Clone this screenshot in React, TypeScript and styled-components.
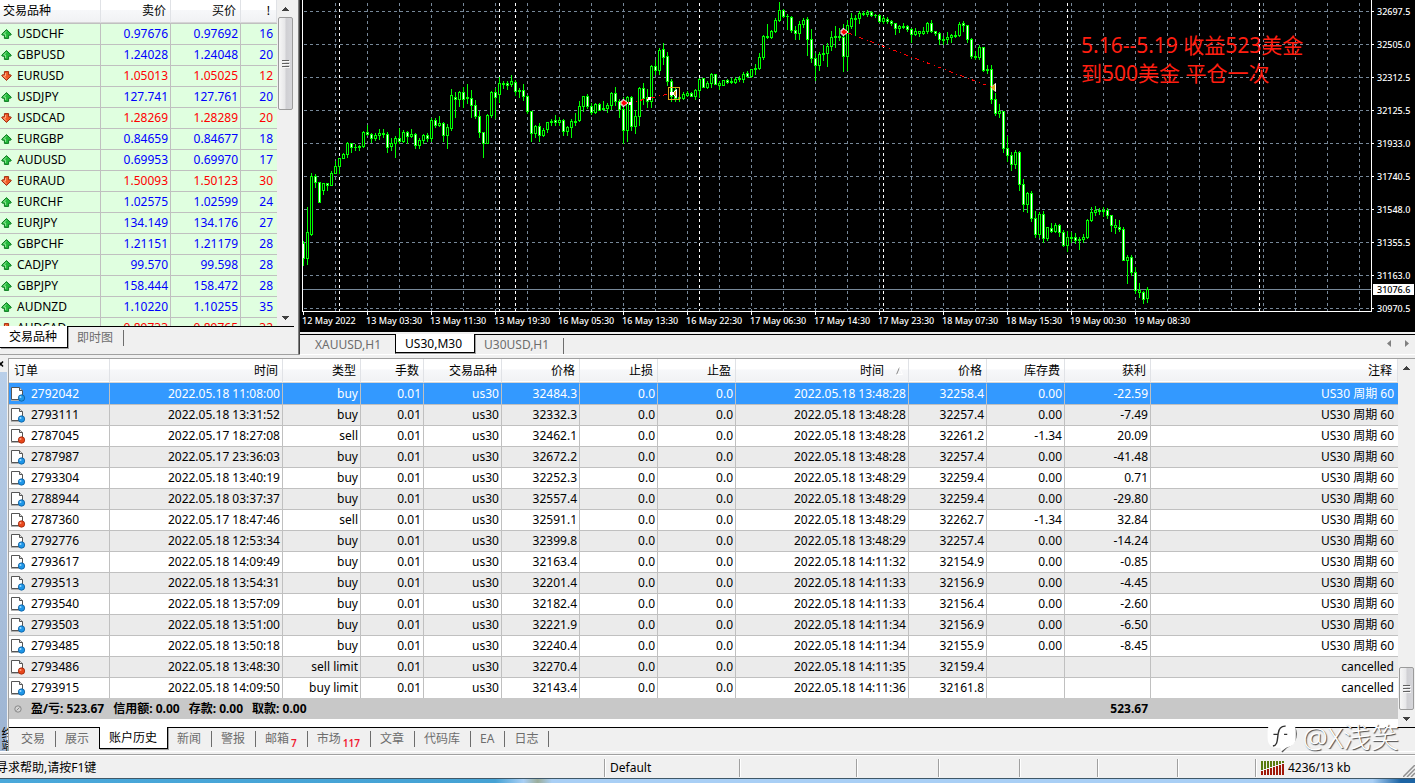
import React from 'react';
import styled, { createGlobalStyle, css } from 'styled-components';

const GlobalStyle = createGlobalStyle`
  *, *::before, *::after { box-sizing: border-box; }
  body {
    margin: 0;
    background: #f0f0f0;
    color: #000;
    font-family: "Noto Sans", "Noto Sans CJK SC", sans-serif;
    font-size: 12px;
    line-height: 20px;
  }
  button { font: inherit; color: inherit; border: 0; margin: 0; padding: 0; background: none; }
`;

/* ---------- data ---------- */

type Quote = [symbol: string, bid: string, ask: string, spread: number, dir: 'up' | 'down'];

const quotes: Quote[] = [
  ['USDCHF', '0.97676', '0.97692', 16, 'up'],
  ['GBPUSD', '1.24028', '1.24048', 20, 'up'],
  ['EURUSD', '1.05013', '1.05025', 12, 'down'],
  ['USDJPY', '127.741', '127.761', 20, 'up'],
  ['USDCAD', '1.28269', '1.28289', 20, 'down'],
  ['EURGBP', '0.84659', '0.84677', 18, 'up'],
  ['AUDUSD', '0.69953', '0.69970', 17, 'up'],
  ['EURAUD', '1.50093', '1.50123', 30, 'down'],
  ['EURCHF', '1.02575', '1.02599', 24, 'up'],
  ['EURJPY', '134.149', '134.176', 27, 'up'],
  ['GBPCHF', '1.21151', '1.21179', 28, 'up'],
  ['CADJPY', '99.570', '99.598', 28, 'up'],
  ['GBPJPY', '158.444', '158.472', 28, 'up'],
  ['AUDNZD', '1.10220', '1.10255', 35, 'up'],
  ['AUDCAD', '0.89733', '0.89765', 32, 'down'],
];

type Order = [
  id: string, opened: string, kind: string, openPrice: string,
  closed: string, closePrice: string, swap: string, profit: string, note: string,
];

const NOTE = 'US30 周期 60';

const orders: Order[] = [
  ['2792042', '2022.05.18 11:08:00', 'buy', '32484.3', '2022.05.18 13:48:28', '32258.4', '0.00', '-22.59', NOTE],
  ['2793111', '2022.05.18 13:31:52', 'buy', '32332.3', '2022.05.18 13:48:28', '32257.4', '0.00', '-7.49', NOTE],
  ['2787045', '2022.05.17 18:27:08', 'sell', '32462.1', '2022.05.18 13:48:28', '32261.2', '-1.34', '20.09', NOTE],
  ['2787987', '2022.05.17 23:36:03', 'buy', '32672.2', '2022.05.18 13:48:28', '32257.4', '0.00', '-41.48', NOTE],
  ['2793304', '2022.05.18 13:40:19', 'buy', '32252.3', '2022.05.18 13:48:29', '32259.4', '0.00', '0.71', NOTE],
  ['2788944', '2022.05.18 03:37:37', 'buy', '32557.4', '2022.05.18 13:48:29', '32259.4', '0.00', '-29.80', NOTE],
  ['2787360', '2022.05.17 18:47:46', 'sell', '32591.1', '2022.05.18 13:48:29', '32262.7', '-1.34', '32.84', NOTE],
  ['2792776', '2022.05.18 12:53:34', 'buy', '32399.8', '2022.05.18 13:48:29', '32257.4', '0.00', '-14.24', NOTE],
  ['2793617', '2022.05.18 14:09:49', 'buy', '32163.4', '2022.05.18 14:11:32', '32154.9', '0.00', '-0.85', NOTE],
  ['2793513', '2022.05.18 13:54:31', 'buy', '32201.4', '2022.05.18 14:11:33', '32156.9', '0.00', '-4.45', NOTE],
  ['2793540', '2022.05.18 13:57:09', 'buy', '32182.4', '2022.05.18 14:11:33', '32156.4', '0.00', '-2.60', NOTE],
  ['2793503', '2022.05.18 13:51:00', 'buy', '32221.9', '2022.05.18 14:11:34', '32156.9', '0.00', '-6.50', NOTE],
  ['2793485', '2022.05.18 13:50:18', 'buy', '32240.4', '2022.05.18 14:11:34', '32155.9', '0.00', '-8.45', NOTE],
  ['2793486', '2022.05.18 13:48:30', 'sell limit', '32270.4', '2022.05.18 14:11:35', '32159.4', '', '', 'cancelled'],
  ['2793915', '2022.05.18 14:09:50', 'buy limit', '32143.4', '2022.05.18 14:11:36', '32161.8', '', '', 'cancelled'],
];

/* Candles as [high, body top, body bottom, low, falling] in plot pixels. */
type Candle = [number, number, number, number, 0 | 1];

const candles: Candle[] = [
  [241, 243, 258, 265, 1], [207, 232, 258, 264, 0], [173, 176, 234, 235, 0], [174, 176, 182, 187, 1],
  [182, 182, 202, 202, 1], [183, 183, 190, 194, 0], [183, 183, 185, 190, 1], [171, 173, 185, 185, 0],
  [161, 166, 173, 173, 0], [158, 158, 166, 173, 0], [153, 154, 158, 158, 0], [142, 143, 154, 157, 0],
  [143, 143, 147, 152, 1], [144, 147, 147, 150, 0], [145, 146, 147, 150, 0], [131, 132, 146, 147, 0],
  [125, 132, 134, 135, 1], [133, 134, 138, 142, 1], [133, 135, 138, 140, 0], [129, 133, 135, 139, 0],
  [129, 133, 134, 137, 0], [132, 134, 147, 152, 1], [138, 143, 146, 150, 0], [136, 138, 143, 157, 0],
  [128, 138, 141, 143, 1], [130, 132, 141, 142, 0], [131, 132, 136, 143, 1], [129, 134, 136, 137, 0],
  [133, 134, 145, 148, 1], [138, 140, 145, 148, 0], [134, 135, 140, 143, 0], [133, 135, 138, 141, 1],
  [118, 120, 138, 141, 0], [118, 120, 125, 127, 1], [116, 123, 125, 126, 0], [122, 123, 135, 141, 1],
  [124, 127, 135, 148, 0], [89, 95, 128, 130, 0], [92, 97, 99, 117, 1], [91, 92, 99, 106, 0],
  [87, 92, 99, 107, 1], [84, 97, 98, 103, 0], [90, 98, 105, 117, 1], [100, 105, 116, 118, 1],
  [111, 116, 132, 137, 1], [132, 132, 143, 157, 1], [114, 115, 143, 143, 0], [91, 92, 115, 117, 0],
  [88, 92, 97, 118, 1], [77, 83, 94, 102, 0], [81, 83, 84, 88, 0], [81, 83, 85, 89, 1],
  [75, 81, 84, 86, 0], [80, 82, 91, 95, 1], [88, 90, 91, 97, 0], [84, 90, 96, 100, 1],
  [95, 96, 111, 113, 1], [111, 111, 133, 141, 1], [125, 126, 133, 137, 0], [123, 126, 135, 141, 1],
  [128, 130, 135, 136, 0], [122, 122, 129, 132, 0], [119, 121, 122, 125, 0], [115, 120, 122, 125, 1],
  [117, 120, 122, 125, 0], [119, 120, 131, 135, 1], [126, 127, 131, 135, 0], [119, 121, 127, 137, 0],
  [113, 121, 122, 125, 0], [101, 106, 120, 121, 0], [96, 96, 106, 111, 0], [94, 96, 106, 108, 1],
  [103, 106, 112, 114, 1], [103, 104, 112, 113, 0], [103, 104, 110, 110, 1], [101, 108, 109, 110, 0],
  [103, 105, 108, 112, 0], [92, 93, 105, 109, 0], [87, 93, 101, 105, 1], [99, 101, 109, 117, 1],
  [97, 109, 130, 143, 1], [96, 97, 130, 141, 0], [96, 97, 126, 130, 1], [110, 116, 126, 133, 0],
  [87, 88, 116, 125, 0], [83, 88, 98, 104, 1], [89, 97, 101, 107, 1], [65, 66, 101, 107, 0],
  [60, 66, 70, 74, 1], [48, 50, 70, 74, 0], [43, 49, 57, 64, 1], [52, 56, 81, 85, 1],
  [79, 81, 96, 101, 1], [88, 90, 98, 101, 1], [95, 97, 98, 101, 0], [92, 94, 98, 99, 0],
  [91, 93, 95, 96, 0], [92, 93, 96, 96, 1], [89, 90, 96, 99, 0], [78, 79, 90, 97, 0],
  [78, 78, 87, 87, 1], [81, 83, 87, 88, 0], [73, 74, 83, 87, 0], [74, 74, 84, 84, 1],
  [81, 83, 85, 89, 0], [80, 80, 85, 85, 0], [79, 80, 82, 83, 1], [78, 81, 82, 83, 0],
  [77, 79, 82, 83, 0], [76, 78, 79, 81, 0], [72, 74, 79, 82, 0], [71, 73, 76, 77, 1],
  [69, 69, 76, 77, 0], [64, 68, 69, 74, 0], [53, 57, 68, 69, 0], [35, 36, 57, 59, 0],
  [24, 36, 37, 38, 0], [30, 31, 37, 38, 0], [18, 20, 31, 32, 0], [2, 10, 20, 21, 0],
  [9, 10, 16, 17, 1], [14, 16, 16, 29, 1], [16, 17, 30, 32, 1], [26, 30, 33, 39, 1],
  [21, 24, 33, 39, 0], [18, 20, 24, 27, 0], [17, 19, 39, 55, 1], [29, 39, 58, 62, 1],
  [53, 58, 65, 80, 1], [52, 54, 65, 70, 0], [45, 53, 54, 60, 0], [43, 46, 53, 66, 0],
  [31, 37, 46, 50, 0], [26, 36, 37, 47, 0], [28, 36, 37, 40, 0], [24, 37, 56, 71, 1],
  [20, 25, 56, 70, 0], [13, 18, 26, 28, 0], [15, 18, 19, 35, 0], [11, 13, 18, 23, 0],
  [11, 13, 14, 15, 0], [10, 12, 14, 16, 0], [11, 12, 15, 16, 1], [14, 15, 15, 17, 0],
  [14, 15, 21, 22, 1], [16, 18, 21, 23, 0], [17, 19, 21, 23, 1], [20, 21, 23, 25, 1],
  [23, 23, 28, 34, 1], [25, 26, 28, 32, 0], [23, 26, 27, 28, 0], [25, 26, 29, 31, 1],
  [28, 29, 34, 42, 1], [28, 31, 34, 35, 0], [31, 31, 33, 36, 0], [27, 31, 33, 34, 0],
  [22, 23, 31, 33, 0], [20, 23, 31, 32, 1], [31, 31, 33, 35, 1], [32, 33, 39, 44, 1],
  [36, 39, 40, 44, 0], [32, 37, 39, 43, 0], [34, 35, 37, 42, 0], [31, 35, 36, 37, 0],
  [22, 24, 35, 36, 0], [21, 23, 25, 31, 1], [25, 25, 39, 42, 1], [38, 39, 56, 58, 1],
  [51, 56, 57, 59, 0], [45, 47, 57, 59, 0], [47, 47, 70, 71, 1], [65, 69, 70, 73, 0],
  [65, 69, 99, 103, 1], [93, 99, 113, 115, 1], [104, 111, 113, 117, 0], [111, 111, 148, 152, 1],
  [136, 148, 155, 161, 1], [152, 155, 164, 170, 1], [150, 152, 164, 168, 0], [151, 152, 184, 190, 1],
  [179, 184, 204, 211, 1], [192, 193, 204, 212, 0], [191, 193, 218, 221, 1], [211, 218, 234, 237, 1],
  [212, 214, 234, 237, 0], [211, 214, 238, 242, 1], [227, 227, 238, 240, 0], [223, 228, 231, 232, 1],
  [223, 225, 231, 232, 0], [224, 225, 232, 236, 1], [230, 232, 245, 246, 1], [231, 237, 245, 251, 0],
  [232, 237, 238, 242, 0], [233, 237, 240, 243, 1], [237, 239, 240, 249, 0], [234, 237, 239, 242, 0],
  [219, 220, 237, 238, 0], [207, 212, 220, 221, 0], [206, 210, 212, 215, 0], [208, 210, 211, 214, 0],
  [207, 210, 211, 216, 0], [208, 210, 215, 218, 1], [215, 215, 225, 231, 1], [219, 225, 227, 233, 0],
  [220, 227, 229, 231, 1], [227, 229, 260, 260, 1], [255, 257, 260, 283, 0], [255, 257, 272, 275, 1],
  [267, 272, 290, 293, 1], [283, 290, 292, 297, 0], [291, 292, 299, 303, 1], [287, 289, 298, 302, 0],
];

const priceScale = [
  '32697.5', '32505.0', '32312.5', '32125.5', '31933.0',
  '31740.5', '31548.0', '31355.5', '31163.0', '30970.5',
];

const timeScale = [
  '12 May 2022', '13 May 03:30', '13 May 11:30', '13 May 19:30', '16 May 05:30',
  '16 May 13:30', '16 May 22:30', '17 May 06:30', '17 May 14:30', '17 May 23:30',
  '18 May 07:30', '18 May 15:30', '19 May 00:30', '19 May 08:30',
];

const daySeparators = [36, 196, 212, 396, 580, 764, 956];

/* ---------- shared parts ---------- */

const TabBar = styled.nav<{ $inset?: number; $lead?: number }>`
  display: flex;
  align-items: flex-start;
  height: 24px;
  border-top: 1px solid #000;
  padding-left: ${p => p.$inset ?? 0}px;
  background: #f0f0f0;
`;

const Tab = styled.button<{ $active?: boolean; $first?: boolean }>`
  height: 22px;
  padding: 0 11px 0 9px;
  line-height: 20px;
  white-space: nowrap;
  color: #6d6d6d;
  background: linear-gradient(#6d6d6d, #6d6d6d) right 3px / 1px 16px no-repeat;
  ${p => p.$active && css`
    margin: -1px 0 0 ${p.$first ? 0 : -1}px;
    padding: 1px 10px 0 9px;
    color: #000;
    background: #fff;
    border: solid #000;
    border-width: 0 1px 1px ${p.$first ? 0 : 1}px;
    box-shadow: 1px 1px 0 #a0a0a0;
  `}
`;

const TabCount = styled.sub`
  margin-left: 2px;
  font-size: 10px;
  line-height: 10px;
  vertical-align: -4px;
  font-weight: 600;
  color: #f01830;
`;

const Track = styled.div`
  display: flex;
  flex-direction: column;
  flex: none;
  width: 17px;
  padding: 0 1px;
  background: #f0f0f0;
`;

const Arrow = styled.button`
  display: flex;
  align-items: center;
  justify-content: center;
  flex: none;
  height: 17px;
  width: 15px;
`;

const Thumb = styled.div<{ $height: number; $push?: boolean }>`
  display: flex;
  align-items: center;
  justify-content: center;
  flex: none;
  height: ${p => p.$height}px;
  margin-top: ${p => (p.$push ? 'auto' : 0)};
  border: 1px solid #9b9b9b;
  border-radius: 2px;
  background: linear-gradient(90deg, #f6f6f6, #e6e6e8 48%, #cfcfd3 52%, #d6d6da);
`;

const Filler = styled.div`
  flex: 1;
`;

function Triangle({ down }: { down?: boolean }) {
  return (
    <svg width="7" height="4" shapeRendering="crispEdges" aria-hidden="true">
      <path d={down ? 'M0 0h7v1H6v1H5v1H4v1H3V3H2V2H1V1H0z' : 'M3 0h1v1h1v1h1v1h1v1H0V3h1V2h1V1h1z'} fill="#404040" />
    </svg>
  );
}

function ScrollBar({ thumb, atEnd }: { thumb: number; atEnd?: boolean }) {
  return (
    <Track>
      <Arrow aria-label="向上滚动"><Triangle /></Arrow>
      <Thumb $height={thumb} $push={atEnd}>
        <svg width="8" height="8" shapeRendering="crispEdges" aria-hidden="true">
          {[0, 3, 6].map(y => (
            <g key={y}>
              <rect y={y} width="7" height="1" fill="#606060" />
              <rect x="1" y={y + 1} width="7" height="1" fill="#f8f8f8" />
            </g>
          ))}
        </svg>
      </Thumb>
      {!atEnd && <Filler />}
      <Arrow aria-label="向下滚动"><Triangle down /></Arrow>
    </Track>
  );
}

const Grid = styled.table`
  flex: 1;
  width: 0;
  table-layout: fixed;
  border-collapse: separate;
  border-spacing: 0;
  align-self: flex-start;
`;

const HeadCell = styled.th<{ $left?: boolean; $pad?: number }>`
  height: 22px;
  padding: 0 ${p => p.$pad ?? 4}px 0 ${p => (p.$left ? p.$pad ?? 4 : 0)}px;
  font-weight: 400;
  line-height: 20px;
  text-align: ${p => (p.$left ? 'left' : 'right')};
  white-space: nowrap;
  border-right: 1px solid #e0e2e6;
  border-bottom: 1px solid #d5d5d5;
  background: linear-gradient(#fff, #fff 45%, #f7f8fa 46%, #f1f2f4);
`;

/* ---------- market watch ---------- */

const Workspace = styled.div`
  display: flex;
  flex: none;
`;

const MarketPanel = styled.section`
  display: flex;
  flex-direction: column;
  flex: none;
  width: 299px;
  border-right: 1px solid #808080;
  border-bottom: 1px solid #a0a0a0;
  padding-right: 4px;
`;

const MarketView = styled.div`
  display: flex;
  height: 326px;
  overflow: hidden;
  background: #fff;
`;

const MarketHead = styled(HeadCell)`
  height: 23px;
`;

const QuoteCell = styled.td<{ $dir?: 'up' | 'down'; $last?: boolean }>`
  height: 21px;
  padding: 0 ${p => (p.$last ? 4 : 2)}px 0 1px;
  border-top: 1px solid #c0c0c0;
  border-right: ${p => (p.$last ? 0 : 1)}px solid #c0c0c0;
  background: #e0ffe0;
  text-align: ${p => (p.$dir ? 'right' : 'left')};
  color: ${p => (p.$dir === 'up' ? '#0000ff' : p.$dir === 'down' ? '#ff0000' : '#000')};
`;

const WithIcon = styled.span`
  display: flex;
  align-items: center;
  gap: 5px;
`;

function QuoteArrow({ dir }: { dir: 'up' | 'down' }) {
  const up = dir === 'up';
  return (
    <svg width="11" height="10" viewBox="0 0 11 10" aria-label={up ? '上涨' : '下跌'}>
      <g transform={up ? undefined : 'matrix(1 0 0 -1 0 10)'}>
        <path d="M5.5 .6 10.3 5.2 9.6 6.2H7.6V9.4H3.4V6.2H1.4L.7 5.2z" fill={up ? '#22b83a' : '#f05a24'} stroke={up ? '#0c7a20' : '#a02a10'} strokeWidth="1" />
        <path d="M5.3 2.2 2.6 5H4.6V8" fill="none" stroke={up ? '#90e896' : '#ffb48a'} strokeWidth="1" />
      </g>
    </svg>
  );
}

function MarketWatch() {
  return (
    <MarketPanel>
      <MarketView>
        <Grid>
          <colgroup>
            <col width="101" /><col width="70" /><col width="70" /><col />
          </colgroup>
          <thead>
            <tr>
              <MarketHead $left $pad={3}>交易品种</MarketHead>
              <MarketHead>卖价</MarketHead>
              <MarketHead>买价</MarketHead>
              <MarketHead $pad={6}>!</MarketHead>
            </tr>
          </thead>
          <tbody>
            {quotes.map(([symbol, bid, ask, spread, dir]) => (
              <tr key={symbol}>
                <QuoteCell><WithIcon><QuoteArrow dir={dir} />{symbol}</WithIcon></QuoteCell>
                <QuoteCell $dir={dir}>{bid}</QuoteCell>
                <QuoteCell $dir={dir}>{ask}</QuoteCell>
                <QuoteCell $dir={dir} $last>{spread}</QuoteCell>
              </tr>
            ))}
          </tbody>
        </Grid>
        <ScrollBar thumb={93} />
      </MarketView>
      <TabBar>
        <Tab $active $first>交易品种</Tab>
        <Tab>即时图</Tab>
      </TabBar>
    </MarketPanel>
  );
}

/* ---------- chart ---------- */

const ChartPanel = styled.section`
  display: flex;
  flex-direction: column;
  flex: 1;
  min-width: 0;
  border-left: 1px solid #404040;
  border-bottom: 1px solid #fff;
`;

const ChartBody = styled.div`
  display: flex;
  background: #000;
  color: #fff;
  font-size: 9px;
  font-weight: 500;
  line-height: 17px;
  padding-left: 2px;
  border-bottom: 1px solid #000;
  margin-bottom: 2px;
`;

const ChartMain = styled.div`
  display: flex;
  flex-direction: column;
  flex: 1;
  min-width: 0;
`;

const Plot = styled.div`
  position: relative;
  height: 312px;
  border: solid #fff;
  border-width: 0 1px 1px 1px;
  overflow: hidden;
`;

const PlotSvg = styled.svg`
  display: block;
  width: 100%;
  height: 311px;
`;

const Annotation = styled.p`
  position: absolute;
  left: 778px;
  top: 31px;
  margin: 0;
  font-size: 21px;
  line-height: 28px;
  font-weight: 400;
  white-space: pre;
  color: #ff1e10;
`;

const TimeAxis = styled.div`
  display: flex;
  height: 19px;
  overflow: hidden;
`;

const TimeLabel = styled.span`
  flex: none;
  width: 64px;
  white-space: nowrap;
  line-height: 18px;
  background: linear-gradient(#fff, #fff) 1px 0 / 1px 3px no-repeat;
`;

const PriceAxis = styled.div`
  position: relative;
  display: flex;
  flex-direction: column;
  gap: 16px;
  width: 43px;
  height: 331px;
  padding-top: 3px;
`;

const PriceLabel = styled.span`
  padding-left: 5px;
  background: linear-gradient(#fff, #fff) 0 8px / 2px 1px no-repeat;
`;

const CurrentPrice = styled.span`
  position: absolute;
  left: 1px;
  right: 1px;
  top: 284px;
  height: 11px;
  padding-left: 4px;
  line-height: 11px;
  color: #000;
  background: #fff;
`;

const ChartTabs = styled(TabBar)`
  height: 20px;
`;

const ChartTab = styled(Tab)`
  height: 19px;
  padding-right: ${p => (p.$active ? 12 : 15)}px;
  line-height: 18px;
`;

const TabScroll = styled.div`
  display: flex;
  gap: 14px;
  margin: 5px 6px 0 auto;
`;

const TabScrollButton = styled.button`
  display: flex;
`;

function Candles() {
  return (
    <g shapeRendering="crispEdges">
      {candles.map(([high, top, bottom, low, falling], i) => (
        <g key={i}>
          <rect x={4 * i} y={high} width="1" height={low - high + 1} fill="#00ff00" />
          <rect x={4 * i - 1} y={top} width="3" height={bottom - top + 1} fill="#00ff00" />
          {bottom - top > 1 && (
            <rect x={4 * i} y={top + 1} width="1" height={bottom - top - 1} fill={falling ? '#fff' : '#000'} />
          )}
        </g>
      ))}
    </g>
  );
}

function EntryArrow({ x, y }: { x: number; y: number }) {
  return (
    <path
      transform={`translate(${x} ${y})`}
      d="M-3 -2H-1V-4L4 0 -1 4V2H-3z"
      fill="#ff0000"
      stroke="#fff"
      strokeWidth="1"
    />
  );
}

function PriceChart() {
  return (
    <PlotSvg role="img" aria-label="US30,M30">
      <g stroke="#778899" strokeDasharray="3 3" shapeRendering="crispEdges">
        {priceScale.map((_, i) => (
          <line key={i} x1="1" x2="100%" y1={11.5 + 33 * i} y2={11.5 + 33 * i} />
        ))}
        {Array.from({ length: 60 }, (_, i) => (
          <line key={i} x1={32.5 + 32 * i} x2={32.5 + 32 * i} y1="3" y2="311" />
        ))}
      </g>
      <g stroke="#fff" strokeDasharray="3 3" shapeRendering="crispEdges">
        {daySeparators.map(x => <line key={x} x1={x + 0.5} x2={x + 0.5} y1="3" y2="311" />)}
      </g>
      <rect y="289" width="100%" height="1" fill="#778899" />
      <Candles />
      <g fill="none" stroke="#ff0000" strokeDasharray="4 4 1 3" shapeRendering="crispEdges">
        <path d="M325 103 370 93" />
        <path d="M545 33 688 87" />
      </g>
      <EntryArrow x={321} y={103} />
      <EntryArrow x={541} y={32} />
      <rect x="326" y="102" width="3" height="3" fill="#fff" />
      <rect x="345" y="97" width="3" height="3" fill="#fff" />
      <path d="M373.5 89.500V97.500L369.500 93.500z" fill="#daa520" stroke="#fff" />
      <rect x="367" y="92" width="4" height="3" fill="#fff" />
      <rect x="365.5" y="87.500" width="11" height="12" fill="none" stroke="#daa520" />
      <path d="M692.500 83.500V91.500L688 87.500z" fill="#daa520" stroke="#fff" />
      <path d="M692 84V91L688 87.500z" fill="#daa520" />
    </PlotSvg>
  );
}

function ChartWindow() {
  return (
    <ChartPanel>
      <ChartBody>
        <ChartMain>
          <Plot>
            <PriceChart />
            <Annotation>{'5.16--5.19 收益523美金\n到500美金 平仓一次'}</Annotation>
          </Plot>
          <TimeAxis>
            {timeScale.map(t => <TimeLabel key={t}>{t}</TimeLabel>)}
          </TimeAxis>
        </ChartMain>
        <PriceAxis>
          {priceScale.map(p => <PriceLabel key={p}>{p}</PriceLabel>)}
          <CurrentPrice>31076.6</CurrentPrice>
        </PriceAxis>
      </ChartBody>
      <ChartTabs $inset={6}>
        <ChartTab>XAUUSD,H1</ChartTab>
        <ChartTab $active>US30,M30</ChartTab>
        <ChartTab>U30USD,H1</ChartTab>
        <TabScroll>
          <TabScrollButton aria-label="向左">
            <svg width="4" height="7" aria-hidden="true"><path d="M4 0V7L0 3.500z" fill="#808080" /></svg>
          </TabScrollButton>
          <TabScrollButton aria-label="向右">
            <svg width="4" height="7" aria-hidden="true"><path d="M0 0V7L4 3.500z" fill="#808080" /></svg>
          </TabScrollButton>
        </TabScroll>
      </ChartTabs>
    </ChartPanel>
  );
}

/* ---------- terminal ---------- */

const Terminal = styled.section`
  position: relative;
  display: flex;
  margin-top: 3px;
  border-bottom: 1px solid #fff;
`;

const SideBar = styled.aside`
  display: flex;
  flex-direction: column;
  flex: none;
  width: 8px;
  overflow: hidden;
`;

const CloseButton = styled.button`
  display: flex;
  height: 14px;
  padding-top: 3px;
`;

const SideTitle = styled.div`
  display: flex;
  align-items: flex-end;
  justify-content: flex-end;
  flex: 1;
  width: 7px;
  writing-mode: vertical-rl;
  line-height: 12px;
  color: #000;
  background: linear-gradient(#b9cfe9, #9db4d2);
`;

const TerminalMain = styled.div`
  flex: 1;
  min-width: 0;
  border: solid #a0a0a0;
  border-width: 1px 0 0 1px;
`;

const OrdersView = styled.div`
  display: flex;
  height: 368px;
  background: #fff;
`;

const OrderHead = styled(HeadCell)`
  height: 24px;
  box-shadow: inset 0 -1px 0 #fff;
`;

const OrderRow = styled.tr<{ $selected?: boolean; $shade?: boolean }>`
  background: ${p => (p.$selected ? '#3399ff' : p.$shade ? '#ebebeb' : '#fff')};
  color: ${p => (p.$selected ? '#fff' : '#000')};
`;

const OrderCell = styled.td<{ $first?: boolean; $last?: boolean }>`
  height: 21px;
  padding: 0 ${p => (p.$last ? 4 : 2)}px 0 1px;
  text-align: right;
  white-space: nowrap;
  border-top: 1px solid #c0c0c0;
  border-right: ${p => (p.$last ? 0 : 1)}px solid #c0c0c0;
  ${p => p.$first && css`border-top-color: transparent;`}
`;

const TotalCell = styled.td<{ $left?: boolean }>`
  height: 21px;
  padding: 0 3px 0 5px;
  font-weight: 700;
  text-align: ${p => (p.$left ? 'left' : 'right')};
  background: #c8c8c8;
`;

const Totals = styled.div`
  display: flex;
  align-items: center;
  gap: 9px;
`;

const SortedLabel = styled.span`
  display: inline-flex;
  align-items: center;
  gap: 12px;
`;

function OrderIcon({ sell }: { sell: boolean }) {
  const [edge, fill, glow] = sell ? ['#9c2408', '#e8481c', '#ffa080'] : ['#0c5c9c', '#1e96e8', '#a0dcff'];
  return (
    <svg width="16" height="16" viewBox="0 0 16 16" aria-label={sell ? '卖' : '买'}>
      <path d="M1.500 1.500H9.500L12.500 4.500V13.500H1.500z" fill="#fff" stroke="#555" />
      <path d="M9.500 1.500V4.500H12.500" fill="#ddd" stroke="#555" />
      <path d="M1 14.500H9" fill="none" stroke="#b0b0b0" />
      <circle cx="11.500" cy="12" r="3.200" fill={fill} stroke={edge} strokeWidth=".8" />
      <circle cx="10.500" cy="10.900" r="1" fill={glow} />
    </svg>
  );
}

const orderColumns = [101, 173, 78, 63, 78, 78, 78, 78, 173, 78, 78, 86];

const terminalTabs: { label: string; count?: number; active?: boolean }[] = [
  { label: '交易' }, { label: '展示' }, { label: '账户历史', active: true }, { label: '新闻' },
  { label: '警报' }, { label: '邮箱', count: 7 }, { label: '市场', count: 117 }, { label: '文章' },
  { label: '代码库' }, { label: 'EA' }, { label: '日志' },
];

function OrderHistory() {
  return (
    <Grid>
      <colgroup>
        {orderColumns.map((w, i) => <col key={i} width={w} />)}
        <col />
      </colgroup>
      <thead>
        <tr>
          <OrderHead $left $pad={5}>订单</OrderHead>
          <OrderHead>时间</OrderHead>
          <OrderHead>类型</OrderHead>
          <OrderHead>手数</OrderHead>
          <OrderHead>交易品种</OrderHead>
          <OrderHead>价格</OrderHead>
          <OrderHead>止损</OrderHead>
          <OrderHead>止盈</OrderHead>
          <OrderHead>
            <SortedLabel>
              时间
              <svg width="8" height="8" aria-hidden="true">
                <path d="M.5 7.500 3.500 .5" stroke="#888" fill="none" />
                <path d="M3.500 .5 6.500 7.500H.5" stroke="#fff" fill="none" />
              </svg>
            </SortedLabel>
          </OrderHead>
          <OrderHead>价格</OrderHead>
          <OrderHead>库存费</OrderHead>
          <OrderHead>获利</OrderHead>
          <OrderHead $pad={5}>注释</OrderHead>
        </tr>
      </thead>
      <tbody>
        {orders.map(([id, opened, kind, openPrice, closed, closePrice, swap, profit, note], i) => {
          const first = i === 0;
          return (
            <OrderRow key={id} $selected={first} $shade={i % 2 === 1}>
              <OrderCell $first={first}>
                <WithIcon><OrderIcon sell={kind.startsWith('sell')} />{id}</WithIcon>
              </OrderCell>
              {[opened, kind, '0.01', 'us30', openPrice, '0.0', '0.0', closed, closePrice, swap, profit].map((v, c) => (
                <OrderCell key={c} $first={first}>{v}</OrderCell>
              ))}
              <OrderCell $first={first} $last>{note}</OrderCell>
            </OrderRow>
          );
        })}
      </tbody>
      <tfoot>
        <tr>
          <TotalCell $left colSpan={11}>
            <Totals>
              <svg width="8" height="8" aria-hidden="true">
                <circle cx="4" cy="4" r="3.200" fill="#d4d4d4" stroke="#888" />
                <path d="M2.500 5.500 5.500 2.500" stroke="#888" />
              </svg>
              <span>盈/亏: 523.67</span>
              <span>信用额: 0.00</span>
              <span>存款: 0.00</span>
              <span>取款: 0.00</span>
            </Totals>
          </TotalCell>
          <TotalCell>523.67</TotalCell>
          <TotalCell />
        </tr>
      </tfoot>
    </Grid>
  );
}

const Watermark = styled.div`
  position: absolute;
  right: 16px;
  bottom: -4px;
  display: flex;
  align-items: center;
  gap: 4px;
  font-size: 28px;
  line-height: 36px;
  font-weight: 300;
  color: #fff;
  text-shadow: 1px 1px 1px #444;
`;

function WatermarkLogo() {
  const bubble = 'M9 1.500H19C24 1.500 27 5 27 10V17C27 23 23 25 18 26L13.500 29.500 12.500 26H8C3 26 .5 22 .5 17V10C.5 5 4 1.500 9 1.500z';
  return (
    <svg width="32" height="34" viewBox="0 0 30 32" aria-hidden="true">
      <path d="M25 6C28 10 28 16 25.500 20 23 24 19 25 17.500 26.500L14 30" fill="none" stroke="#555" strokeWidth="1.500" />
      <path d={bubble} fill="#fff" />
      <path d="M5.500 24.500C10 24 9.500 19 10.500 12.500 11.200 7.500 13 5.500 17.500 5.800M6 13.500H10M16 13.500H19" fill="none" stroke="#333" strokeWidth="1.300" />
    </svg>
  );
}

function TerminalPanel() {
  return (
    <Terminal>
      <SideBar>
        <CloseButton aria-label="关闭">
          <svg width="4" height="6" aria-hidden="true"><path d="M-1.500 .5 3 5.500M3 .5 -1.500 5.500" stroke="#000" strokeWidth="1.500" /></svg>
        </CloseButton>
        <SideTitle>终端</SideTitle>
      </SideBar>
      <TerminalMain>
        <OrdersView>
          <OrderHistory />
          <ScrollBar thumb={43} atEnd />
        </OrdersView>
        <TabBar $inset={3}>
          {terminalTabs.map(t => (
            <Tab key={t.label} $active={t.active}>
              {t.label}
              {t.count && <TabCount>{t.count}</TabCount>}
            </Tab>
          ))}
        </TabBar>
      </TerminalMain>
      <Watermark>
        <WatermarkLogo />
        <span>@X浅笑</span>
      </Watermark>
    </Terminal>
  );
}

/* ---------- status bar ---------- */

const StatusBar = styled.footer`
  display: flex;
  align-items: center;
  height: 25px;
  margin-top: 2px;
  border-top: 1px solid #a0a0a0;
  border-bottom: 1px solid #405868;
  box-shadow: inset 0 1px 0 #fff;
  overflow: hidden;
`;

const StatusCell = styled.div<{ $width?: number }>`
  display: flex;
  align-items: center;
  gap: 3px;
  height: 18px;
  margin-top: 2px;
  flex: ${p => (p.$width ? `0 0 ${p.$width}px` : '1')};
  padding-left: 5px;
  border-left: 1px solid #a0a0a0;
  box-shadow: inset 1px 0 0 #fff;
  white-space: nowrap;
`;

const HelpCell = styled(StatusCell)`
  border-left: 0;
  box-shadow: none;
  padding-left: 0;
  text-indent: -4px;
`;

const Grip = styled.svg`
  margin-left: auto;
  align-self: flex-end;
`;

const Desktop = styled.div`
  flex: 1;
  min-height: 4px;
  background: linear-gradient(90deg, #4aa8da, #45a2d4 35%, #a9cff5 37%, #9cae9c 38%, #a9cff5 39%, #a9cff5 97%, #1c64a4 99%);
`;

function Status() {
  return (
    <StatusBar>
      <HelpCell>寻求帮助,请按F1键</HelpCell>
      <StatusCell $width={135}>Default</StatusCell>
      <StatusCell $width={117} />
      <StatusCell $width={82} />
      <StatusCell $width={81} />
      <StatusCell $width={78} />
      <StatusCell $width={80} />
      <StatusCell $width={78} />
      <StatusCell $width={160}>
        <svg width="24" height="14" shapeRendering="crispEdges" aria-hidden="true">
          {Array.from({ length: 8 }, (_, i) => (
            <g key={i}>
              <rect x={3 * i} y="0" width="2" height={9 - i} fill="#5a7a10" />
              <rect x={3 * i} y={10 - i} width="2" height={4 + i} fill="#a01808" />
            </g>
          ))}
        </svg>
        <span>4236/13 kb</span>
        <Grip width="12" height="12" aria-hidden="true">
          <path d="M0 12 12 0M4 12 12 4M8 12 12 8" stroke="#909090" strokeWidth="1.500" />
        </Grip>
      </StatusCell>
    </StatusBar>
  );
}

const Page = styled.div`
  display: flex;
  flex-direction: column;
  min-height: 100vh;
  background: #f0f0f0;
  overflow: hidden;
`;

export default function App() {
  return (
    <Page>
      <GlobalStyle />
      <Workspace>
        <MarketWatch />
        <ChartWindow />
      </Workspace>
      <TerminalPanel />
      <Status />
      <Desktop />
    </Page>
  );
}
